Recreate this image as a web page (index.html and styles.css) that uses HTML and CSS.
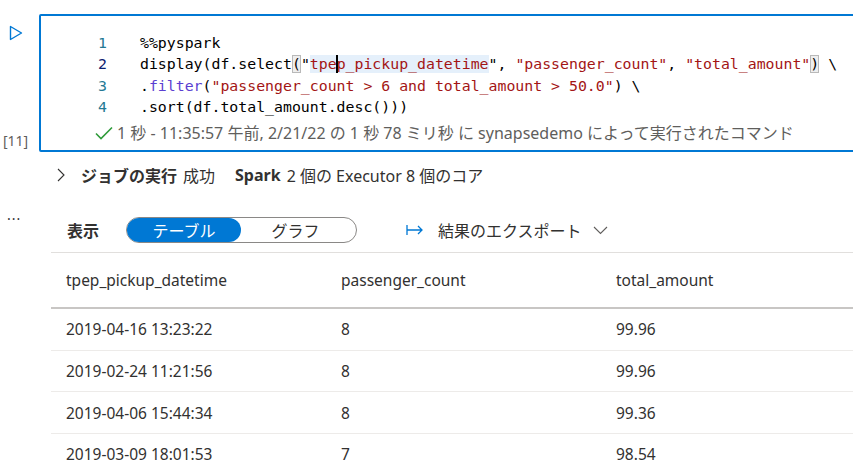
FILE: index.html
```html
<!DOCTYPE html>
<html lang="ja">
<head>
<meta charset="utf-8">
<title>Notebook cell</title>
<link rel="stylesheet" href="styles.css">
</head>
<body>
<div class="page">
  <div class="cell-row">
    <div class="gutter">
      <svg class="run" width="14" height="16" viewBox="0 0 14 16"><path d="M1.5 1.5 L12.5 8 L1.5 14.5 Z" fill="none" stroke="#0078d4" stroke-width="1.4" stroke-linejoin="round"/></svg>
      <div class="exec-count">[11]</div>
    </div>
    <div class="cell">
      <div class="code">
        <div class="line"><span class="ln">1</span><span class="src">%%pyspark</span></div>
        <div class="line"><span class="ln cur">2</span><span class="src">display(df.select<span class="br">(</span>"<span class="sel">tpe<span class="caret"></span>p_pickup_datetime</span>", <span class="str">"passenger_count"</span>, <span class="str">"total_amount"</span><span class="br">)</span> \</span></div>
        <div class="line"><span class="ln">3</span><span class="src">.<span class="fn">filter</span>(<span class="str">"passenger_count &gt; 6 and total_amount &gt; 50.0"</span>) \</span></div>
        <div class="line"><span class="ln">4</span><span class="src">.sort(df.total_amount.desc()))</span></div>
      </div>
      <div class="status">
        <svg class="check" width="18" height="14" viewBox="0 0 18 14"><path d="M1 7.5 L6 12.5 L17 1.5" fill="none" stroke="#2f9b3a" stroke-width="1.6"/></svg>
        <span>1 秒 - 11:35:57 午前, 2/21/22 の 1 秒 78 ミリ秒 に synapsedemo によって実行されたコマンド</span>
      </div>
    </div>
  </div>

  <div class="job-row">
    <svg class="chev" width="8" height="14" viewBox="0 0 8 14"><path d="M1 1 L7 7 L1 13" fill="none" stroke="#323130" stroke-width="1.1"/></svg>
    <span class="b">ジョブの実行</span><span class="sp1">成功</span>
    <span class="b spark">Spark</span><span class="sp1">2 個の Executor 8 個のコア</span>
  </div>

  <div class="view-row">
    <div class="more">···</div>
    <div class="view-label">表示</div>
    <div class="toggle">
      <div class="opt active">テーブル</div>
      <div class="opt">グラフ</div>
    </div>
    <div class="export">
      <svg width="18" height="12" viewBox="0 0 18 12"><path d="M1 1 V11 M1 6 H16 M12 2 L16 6 L12 10" fill="none" stroke="#0078d4" stroke-width="1.3"/></svg>
      <span class="export-text">結果のエクスポート</span>
      <svg width="15" height="9" viewBox="0 0 15 9"><path d="M1 1 L7.5 7.5 L14 1" fill="none" stroke="#605e5c" stroke-width="1.1"/></svg>
    </div>
  </div>

  <div class="table">
    <div class="tr head"><div>tpep_pickup_datetime</div><div>passenger_count</div><div>total_amount</div></div>
    <div class="tr"><div>2019-04-16 13:23:22</div><div>8</div><div>99.96</div></div>
    <div class="tr"><div>2019-02-24 11:21:56</div><div>8</div><div>99.96</div></div>
    <div class="tr"><div>2019-04-06 15:44:34</div><div>8</div><div>99.36</div></div>
    <div class="tr"><div>2019-03-09 18:01:53</div><div>7</div><div>98.54</div></div>
  </div>
</div>
</body>
</html>
```

FILE: styles.css
```css
html, body {
  margin: 0;
  padding: 0;
  background: #ffffff;
  overflow: hidden;
}
body {
  width: 853px;
  height: 460px;
  font-family: "Noto Sans", "Noto Sans CJK JP", sans-serif;
  color: #323130;
}
.page {
  padding-top: 14px;
}
.cell-row {
  display: flex;
}
.gutter {
  width: 39px;
  flex: none;
  display: flex;
  flex-direction: column;
  justify-content: space-between;
  padding: 11px 0 2px 0;
  box-sizing: border-box;
}
.run {
  margin-left: 9px;
  display: block;
}
.exec-count {
  font-size: 14px;
  color: #605e5c;
  padding-left: 3px;
  line-height: 18px;
}
.cell {
  flex: none;
  width: 840px;
  border: 2px solid #0078d4;
  border-radius: 2px;
  padding: 17px 0 7px 0;
  box-sizing: border-box;
  height: 138px;
}
.code {
  font-family: "DejaVu Sans Mono", monospace;
  font-size: 14.85px;
  line-height: 21.4px;
  color: #000000;
}
.line {
  display: flex;
  white-space: pre;
}
.ln {
  width: 66px;
  text-align: right;
  color: #237893;
  flex: none;
}
.ln.cur {
  color: #0b216f;
}
.src {
  margin-left: 33px;
}
.str, .sel {
  color: #a31515;
}
.sel {
  background: #e5f0fb;
  position: relative;
}
.caret {
  position: absolute;
  top: 0;
  bottom: 0;
  width: 2px;
  margin-left: -1px;
  background: #000000;
}
.fn {
  color: #5b3fd1;
}
.br {
  outline: 1px solid #b9b9b9;
  outline-offset: -1px;
  background: #eeeeee;
}
.status {
  display: flex;
  align-items: center;
  margin-top: 4px;
  margin-left: 54px;
  font-size: 16px;
  line-height: 20px;
  color: #605e5c;
  gap: 4px;
}
.check {
  display: block;
}
.job-row {
  display: flex;
  align-items: center;
  height: 24px;
  margin-top: 11px;
  padding-left: 57px;
  font-size: 16px;
  white-space: pre;
}
.chev {
  margin-right: 16px;
}
.b {
  font-weight: 700;
}
.sp1 {
  margin-left: 6px;
}
.spark {
  margin-left: 20px;
}
.view-row {
  display: flex;
  align-items: center;
  margin-top: 29px;
  height: 28px;
  font-size: 16px;
}
.more {
  width: 67px;
  padding-left: 7px;
  box-sizing: border-box;
  font-size: 14px;
  letter-spacing: 1px;
  margin-top: -24px;
  color: #323130;
}
.view-label {
  font-weight: 700;
  width: 59px;
}
.toggle {
  display: flex;
  width: 231px;
  height: 26px;
  border: 1px solid #8a8886;
  border-radius: 14px;
  box-sizing: border-box;
  padding: 0;
}
.opt {
  flex: none;
  display: flex;
  align-items: center;
  justify-content: center;
  font-size: 16px;
}
.opt.active {
  width: 114px;
  background: #0078d4;
  color: #ffffff;
  border-radius: 13px;
}
.opt + .opt {
  flex: 1;
  padding-right: 6px;
}
.export {
  display: flex;
  align-items: center;
  margin-left: 49px;
}
.export-text {
  margin-left: 14px;
  margin-right: 11px;
}
.table {
  margin-top: 8px;
  margin-left: 51px;
  border-top: 1px solid #e1dfdd;
  font-size: 15.5px;
}
.tr {
  display: grid;
  grid-template-columns: 275px 275px 1fr;
  height: 41.7px;
  align-items: center;
  border-bottom: 1px solid #edebe9;
  box-sizing: border-box;
}
.tr > div {
  padding-left: 15px;
}
.tr.head {
  height: 56px;
  border-bottom: 2px solid #c8c6c4;
}
```
